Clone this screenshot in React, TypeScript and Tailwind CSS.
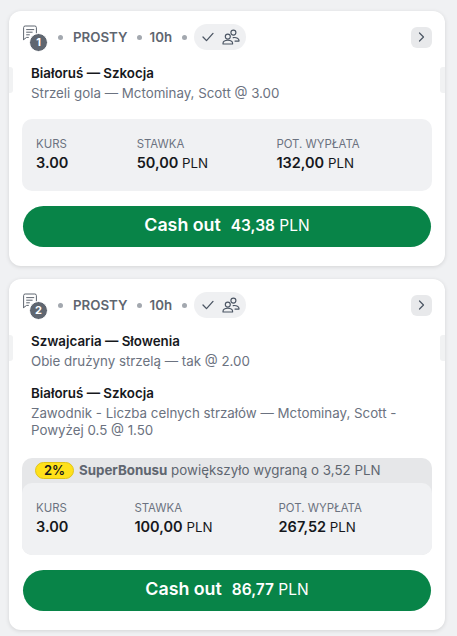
import React from "react";

function BubbleIcon() {
  return (
    <svg width="17" height="17" viewBox="0 0 17 17" fill="none" stroke="#5f6670" strokeWidth="1" strokeLinecap="round" strokeLinejoin="round" className="block">
      <path d="M1.6 14.6 V2.6 a1.6 1.6 0 0 1 1.6-1.6 h9.6 a1.6 1.6 0 0 1 1.6 1.6 v5.5" />
      <path d="M1.6 14.6 l3-2.2 h1.8" />
      <path d="M4.6 4.6 h7.2 M4.6 7.2 h5.6 M4.6 9.8 h2.8" />
    </svg>
  );
}

function UsersIcon() {
  return (
    <svg width="18" height="17" viewBox="0 0 18 17" fill="none" stroke="#4b5563" strokeWidth="1.15" strokeLinecap="round" strokeLinejoin="round" className="block">
      <circle cx="11.4" cy="3.6" r="2.5" />
      <circle cx="5.8" cy="7.6" r="2.5" />
      <path d="M1 15 v-.6 c0-2 1.9-3.2 4.8-3.2 s4.8 1.2 4.8 3.2 v.6 z" />
      <path d="M11.2 8.6 c3.6-.4 5.8.9 5.8 3 v.5 h-4" />
    </svg>
  );
}

function Dot() {
  return <span className="block w-[5px] h-[5px] rounded-full bg-[#a3a8af] shrink-0" />;
}

function Header({ n }: { n: number }) {
  return (
    <div className="flex items-center h-[26px] pl-[13px] pr-[13px]">
      <div className="relative w-[25px] h-[26px] shrink-0">
        <div className="absolute left-[0px] top-[1px]">
          <BubbleIcon />
        </div>
        <span className="absolute left-[8px] top-[10px] w-[17px] h-[17px] rounded-full bg-[#5f6670] border border-white box-content -m-px flex items-center justify-center text-white text-[11px] font-bold leading-none">
          {n}
        </span>
      </div>
      <span className="ml-[11px] block"><Dot /></span>
      <span className="ml-[10px] pt-px text-[13.3px] font-semibold text-[#5f6670] leading-none">PROSTY</span>
      <span className="ml-[9px] block"><Dot /></span>
      <span className="ml-[8px] pt-px text-[13.3px] font-semibold text-[#5f6670] leading-none">10h</span>
      <span className="ml-[10px] block"><Dot /></span>
      <span className="ml-[7px] h-[26px] w-[52px] rounded-full bg-[#eff0f2] flex items-center justify-center gap-[8px] pl-px">
        <svg width="12" height="10" viewBox="0 0 12 10" fill="none" stroke="#4b5563" strokeWidth="1.3" strokeLinecap="round" strokeLinejoin="round">
          <path d="M1 5 l3.5 3.6 L11 1.4" />
        </svg>
        <UsersIcon />
      </span>
      <span className="ml-auto w-[21px] h-[21px] rounded-[6px] bg-[#e8e9eb] flex items-center justify-center">
        <svg width="7" height="10" viewBox="0 0 7 10" fill="none" stroke="#4b5563" strokeWidth="1.2" strokeLinecap="round" strokeLinejoin="round">
          <path d="M1.5 1 L5.5 5 L1.5 9" />
        </svg>
      </span>
    </div>
  );
}

function Handle({ side }: { side: "l" | "r" }) {
  return (
    <span
      className={
        side === "l"
          ? "absolute left-0 top-[4px] w-[4px] h-[26px] bg-[#f1f2f3] rounded-r-[3px]"
          : "absolute right-0 top-[4px] w-[5px] h-[26px] bg-[#f1f2f3] rounded-l-[3px]"
      }
    />
  );
}

function Selection({ title, lines, handles }: { title: string; lines: string[]; handles?: boolean }) {
  return (
    <div className="relative px-[22px]">
      {handles && (
        <>
          <Handle side="l" />
          <Handle side="r" />
        </>
      )}
      <div className="text-[13.33px] leading-[20px] font-semibold text-[#16181c]">{title}</div>
      <div className="text-[13.33px] leading-[17px] mt-[2px] text-[#6b7280]">
        {lines.map((l) => (
          <div key={l}>{l}</div>
        ))}
      </div>
    </div>
  );
}

function Stat({ label, value, unit }: { label: string; value: string; unit?: string }) {
  return (
    <div className="grow">
      <div className="text-[11.4px] leading-[14px] text-[#6b7280]">{label}</div>
      <div className="mt-[2px] text-[14.5px] leading-[20px] text-[#16181c] whitespace-nowrap">
        <span className="font-semibold">{value}</span>
        {unit && <span className="text-[13.3px]"> {unit}</span>}
      </div>
    </div>
  );
}

function Stats({ stawka, wyplata }: { stawka: string; wyplata: string }) {
  return (
    <div className="h-[72px] rounded-[10px] bg-[#f0f1f3] pl-[14px] pr-[4px] flex items-center">
      <div className="flex w-full">
        <Stat label="KURS" value="3.00" />
        <Stat label="STAWKA" value={stawka} unit="PLN" />
        <Stat label="POT. WYPŁATA" value={wyplata} unit="PLN" />
      </div>
    </div>
  );
}

function CashOut({ amount }: { amount: string }) {
  return (
    <div className="mx-px mt-[15px] h-[41px] pb-[2px] rounded-full bg-[#088448] text-white flex items-center justify-center gap-[10px]">
      <span className="text-[17.8px] font-semibold">Cash out</span>
      <span className="text-[15.5px]">
        <span className="font-semibold">{amount}</span> PLN
      </span>
    </div>
  );
}

export default function App() {
  return (
    <div className="h-[636px] bg-[#f0f1f3] pt-[11px] px-[9px] flex flex-col gap-[13px] overflow-hidden [font-family:Inter,sans-serif]">
      <div className="w-[436px] h-[255px] shrink-0 rounded-[12px] bg-white shadow-[0_1px_4px_rgba(0,0,0,0.12)] pt-[13px]">
        <Header n={1} />
        <div className="mt-[13px]">
          <Selection handles title="Białoruś — Szkocja" lines={["Strzeli gola — Mctominay, Scott @ 3.00"]} />
        </div>
        <div className="mx-[13px] mt-[17px]">
          <Stats stawka="50,00" wyplata="132,00" />
          <CashOut amount="43,38" />
        </div>
      </div>
      <div className="w-[436px] h-[351px] shrink-0 rounded-[12px] bg-white shadow-[0_1px_4px_rgba(0,0,0,0.12)] pt-[13px]">
        <Header n={2} />
        <div className="mt-[13px]">
          <Selection handles title="Szwajcaria — Słowenia" lines={["Obie drużyny strzelą — tak @ 2.00"]} />
        </div>
        <div className="mt-[13px]">
          <Selection
            title="Białoruś — Szkocja"
            lines={["Zawodnik - Liczba celnych strzałów — Mctominay, Scott -", "Powyżej 0.5 @ 1.50"]}
          />
        </div>
        <div className="mx-[13px] mt-[19px]">
          <div className="rounded-[10px] bg-[#e6e7e9]">
            <div className="h-[25px] pl-[13px] flex items-center gap-[5px] text-[13.33px] text-[#5f6670]">
              <span className="w-[39px] h-[17px] rounded-full bg-[#ffe11a] border border-[#e0c419] text-[#16181c] flex items-center justify-center font-semibold text-[13px] leading-none">
                2%
              </span>
              <span>
                <span className="font-bold">SuperBonusu</span> powiększyło wygraną o 3,52 PLN
              </span>
            </div>
            <Stats stawka="100,00" wyplata="267,52" />
          </div>
          <CashOut amount="86,77" />
        </div>
      </div>
    </div>
  );
}
